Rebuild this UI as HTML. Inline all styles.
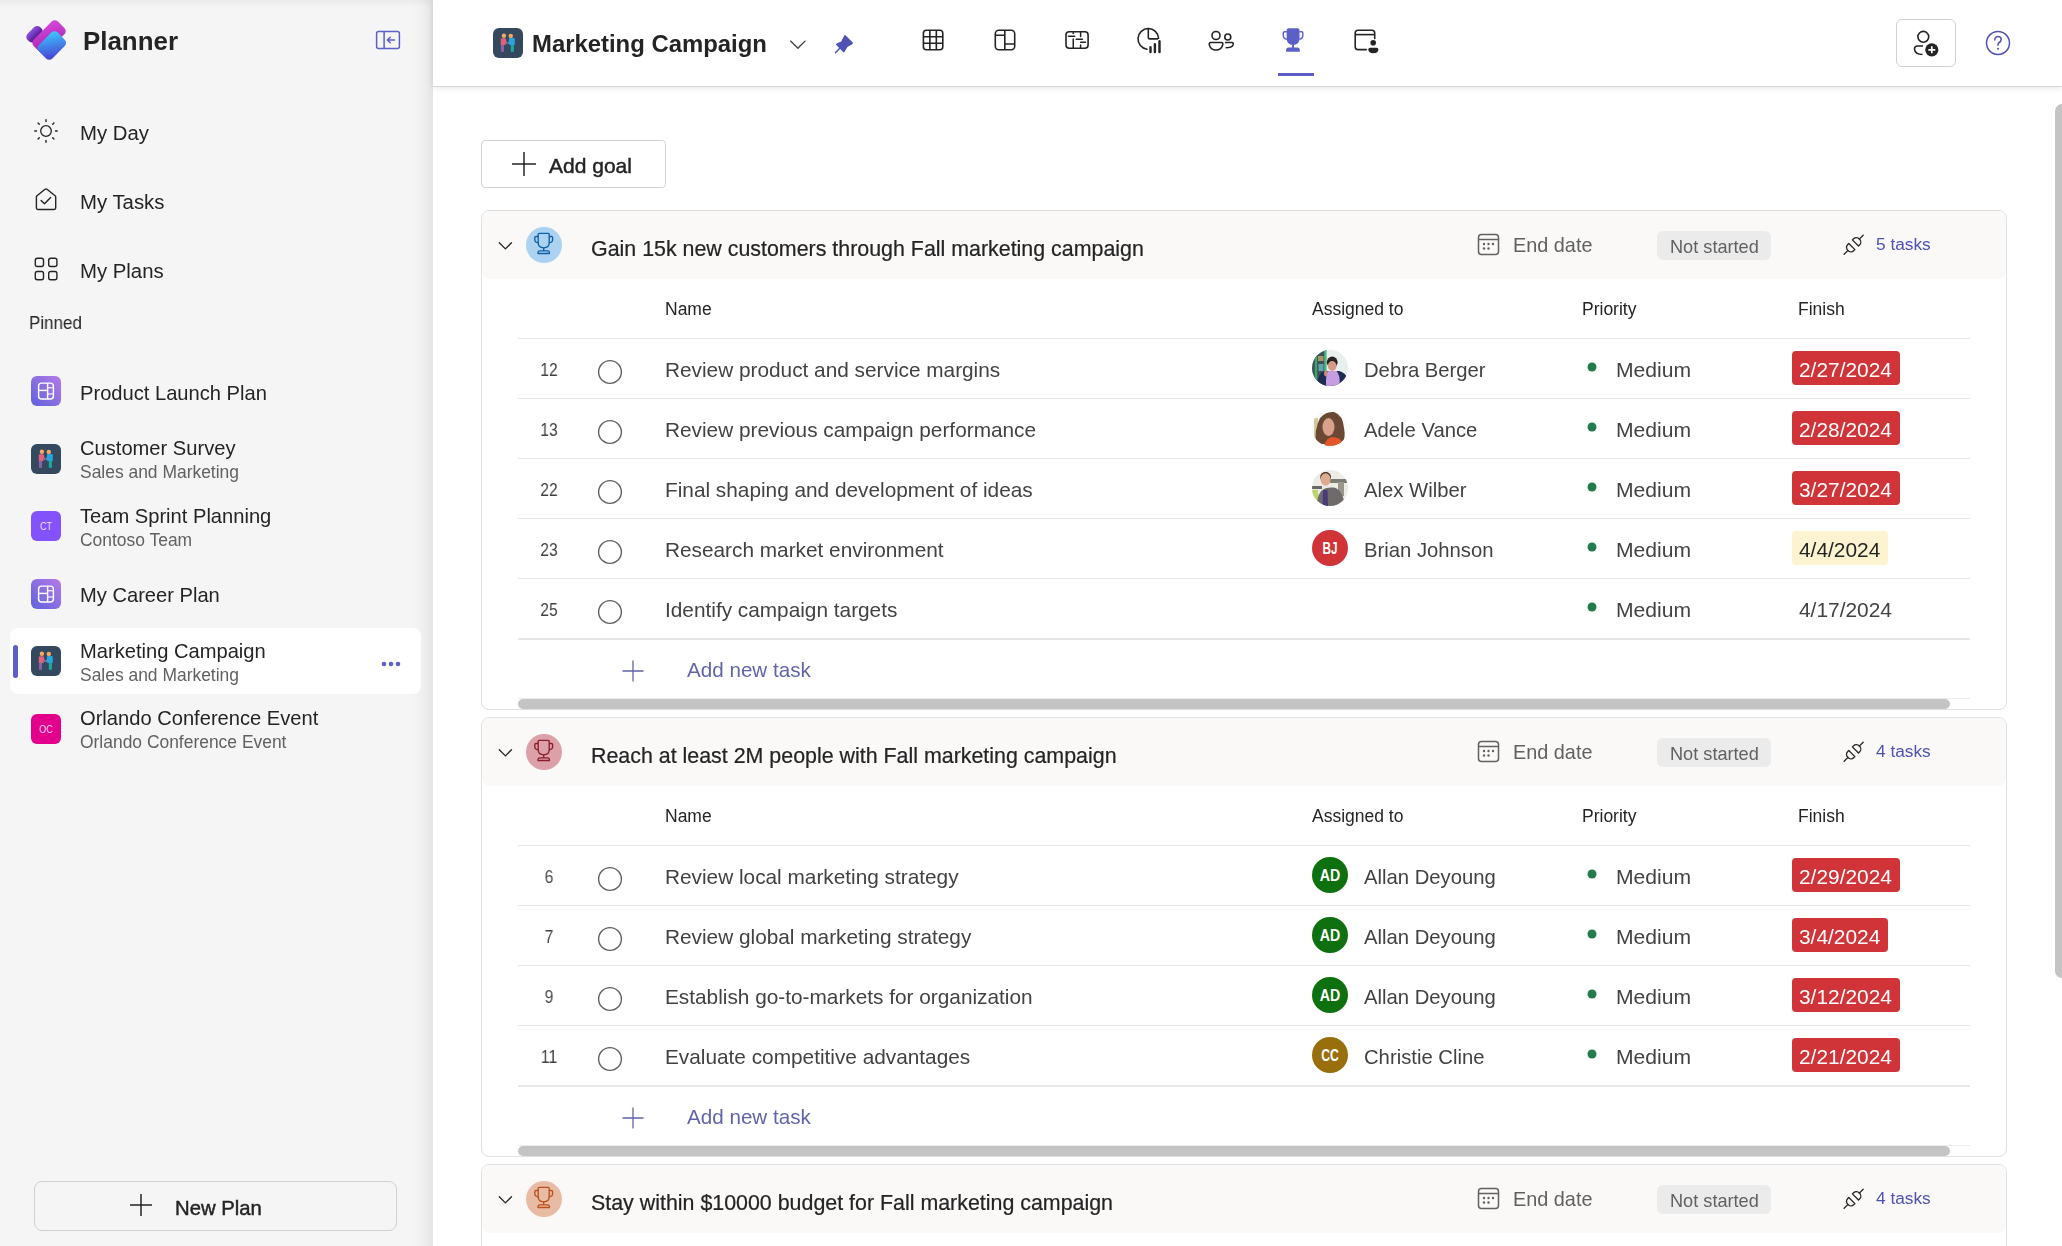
<!DOCTYPE html><html><head><meta charset="utf-8"><style>
html,body{margin:0;padding:0;width:2062px;height:1246px;overflow:hidden;background:#fff;font-family:"Liberation Sans", sans-serif;}
.t{position:absolute;white-space:nowrap;line-height:1;will-change:transform;}
.r{position:absolute;}
</style></head><body>
<div class="r" style="left:0px;top:0px;width:433px;height:1246px;background:#f5f5f5"></div>
<div class="r" style="left:0px;top:0px;width:433px;height:8px;background:linear-gradient(to bottom,rgba(0,0,0,0.04),rgba(0,0,0,0))"></div>
<div class="r" style="left:411px;top:0px;width:22px;height:1246px;background:linear-gradient(to right,rgba(0,0,0,0),rgba(0,0,0,0.02) 50%,rgba(0,0,0,0.065))"></div>
<svg class="r" style="left:22px;top:16px" width="48" height="48" viewBox="0 0 48 48">
<defs>
<linearGradient id="lg1" x1="0" y1="0" x2="0" y2="1"><stop offset="0" stop-color="#8d52e2"/><stop offset="1" stop-color="#4e1288"/></linearGradient>
<linearGradient id="lg2" x1="1" y1="0" x2="0" y2="1"><stop offset="0" stop-color="#db4ae0"/><stop offset="1" stop-color="#9a20a6"/></linearGradient>
<linearGradient id="lg3" x1="1" y1="0" x2="0" y2="1"><stop offset="0" stop-color="#3bd0fc"/><stop offset="1" stop-color="#4a36d4"/></linearGradient>
</defs>
<g transform="rotate(-45 24 24)">
<rect x="11" y="6.5" width="18" height="10.5" rx="4.5" fill="url(#lg1)"/>
<rect x="11" y="15" width="34.5" height="18" rx="4.5" fill="url(#lg2)"/>
<rect x="11" y="22.5" width="26.5" height="19" rx="4.5" fill="url(#lg3)"/>
</g></svg>
<div class="t" style="left:83.0px;top:29.49px;font-size:25.9px;color:#242424;font-weight:700;">Planner</div>
<svg class="r" style="left:374px;top:29px" width="28" height="22" viewBox="0 0 28 22"><rect x="2.6" y="2.6" width="22.8" height="17" rx="2" fill="none" stroke="#5b5fc7" stroke-width="1.5"/><line x1="10.1" y1="2.6" x2="10.1" y2="19.6" stroke="#5b5fc7" stroke-width="1.5"/><path d="M20.6 11H13.4M16.2 8.2L13.4 11L16.2 13.8" fill="none" stroke="#5b5fc7" stroke-width="1.5" stroke-linecap="round" stroke-linejoin="round"/></svg>
<svg class="r" style="left:33px;top:118px" width="26" height="26" viewBox="0 0 26 26"><circle cx="13" cy="13" r="5.3" fill="none" stroke="#242424" stroke-width="1.3"/><line x1="22.50" y1="13.00" x2="24.20" y2="13.00" stroke="#242424" stroke-width="1.4" stroke-linecap="round"/><line x1="19.72" y1="19.72" x2="20.92" y2="20.92" stroke="#242424" stroke-width="1.4" stroke-linecap="round"/><line x1="13.00" y1="22.50" x2="13.00" y2="24.20" stroke="#242424" stroke-width="1.4" stroke-linecap="round"/><line x1="6.28" y1="19.72" x2="5.08" y2="20.92" stroke="#242424" stroke-width="1.4" stroke-linecap="round"/><line x1="3.50" y1="13.00" x2="1.80" y2="13.00" stroke="#242424" stroke-width="1.4" stroke-linecap="round"/><line x1="6.28" y1="6.28" x2="5.08" y2="5.08" stroke="#242424" stroke-width="1.4" stroke-linecap="round"/><line x1="13.00" y1="3.50" x2="13.00" y2="1.80" stroke="#242424" stroke-width="1.4" stroke-linecap="round"/><line x1="19.72" y1="6.28" x2="20.92" y2="5.08" stroke="#242424" stroke-width="1.4" stroke-linecap="round"/></svg>
<div class="t" style="left:80.0px;top:122.70px;font-size:20.35px;color:#242424;">My Day</div>
<svg class="r" style="left:33px;top:187px" width="26" height="26" viewBox="0 0 26 26"><path d="M3.4 10 Q3.4 9.3 4 8.8 L12 2.3 Q13 1.6 14 2.3 L22.1 8.8 Q22.7 9.3 22.7 10 V21 Q22.7 22.45 21.2 22.45 H4.9 Q3.4 22.45 3.4 21 Z" fill="none" stroke="#242424" stroke-width="1.4" stroke-linejoin="round"/><path d="M8.1 13.5 L11.5 16.8 L17.6 10.4" fill="none" stroke="#242424" stroke-width="1.4" stroke-linecap="round" stroke-linejoin="round"/></svg>
<div class="t" style="left:80.0px;top:191.70px;font-size:20.35px;color:#242424;">My Tasks</div>
<svg class="r" style="left:33px;top:256px" width="26" height="26" viewBox="0 0 26 26"><rect x="2.3" y="2.3" width="8.2" height="8.2" rx="2" fill="none" stroke="#242424" stroke-width="1.4"/><rect x="15.7" y="2.3" width="8.2" height="8.2" rx="2" fill="none" stroke="#242424" stroke-width="1.4"/><rect x="2.3" y="15.5" width="8.2" height="8.2" rx="2" fill="none" stroke="#242424" stroke-width="1.4"/><rect x="15.7" y="15.5" width="8.2" height="8.2" rx="2" fill="none" stroke="#242424" stroke-width="1.4"/></svg>
<div class="t" style="left:80.0px;top:260.70px;font-size:20.35px;color:#242424;">My Plans</div>
<div class="t" style="left:28.5px;top:313.96px;font-size:18.4px;color:#242424;transform:scaleX(0.925);transform-origin:0 0;">Pinned</div>
<svg class="r" style="left:31px;top:376px" width="30" height="30" viewBox="0 0 30 30"><defs><linearGradient id="bga" x1="0" y1="1" x2="1" y2="0"><stop offset="0" stop-color="#5d63de"/><stop offset="1" stop-color="#b57ae6"/></linearGradient></defs>
<rect x="0" y="0" width="30" height="30" rx="6" fill="url(#bga)"/>
<rect x="7.6" y="7.1" width="14.8" height="15.8" rx="3" fill="none" stroke="#fff" stroke-width="1.45"/>
<line x1="16.6" y1="7.1" x2="16.6" y2="22.9" stroke="#fff" stroke-width="1.45"/><line x1="7.6" y1="14.4" x2="16.6" y2="14.4" stroke="#fff" stroke-width="1.45"/>
<line x1="16.6" y1="11.7" x2="22.4" y2="11.7" stroke="#fff" stroke-opacity="0.85" stroke-width="1.3"/><line x1="16.6" y1="17.95" x2="22.4" y2="17.95" stroke="#fff" stroke-opacity="0.85" stroke-width="1.3"/></svg>
<div class="t" style="left:80.0px;top:382.88px;font-size:20.14px;color:#242424;">Product Launch Plan</div>
<svg class="r" style="left:31px;top:444px" width="30" height="30" viewBox="0 0 30 30"><rect x="0" y="0" width="30" height="30" rx="6" fill="#34495e"/>
<circle cx="10.9" cy="7.8" r="2.2" fill="#f3a864"/><circle cx="17.8" cy="7.9" r="2.2" fill="#f3a864"/>
<path d="M7.8 11.2 Q7.8 10.2 8.8 10.2 H11.8 Q12.8 10.2 13 11.2 L13.4 13.8 L14.6 15.1 L13.8 15.9 L12.6 14.8 V16.9 H7.8 Z" fill="#e1627c"/>
<path d="M16 10.9 Q16 9.9 17 9.9 H20.8 Q21.8 9.9 21.8 10.9 V16.9 H16.2 V15.6 L14.6 15.9 L14.2 15.1 L15.8 13.5 Z" fill="#2ba3dc"/>
<rect x="7.9" y="16.9" width="3.1" height="6.9" fill="#8c5fa8"/>
<rect x="17.8" y="16.9" width="3.1" height="6.9" fill="#1ba9a2"/></svg>
<div class="t" style="left:80.0px;top:437.88px;font-size:20.14px;color:#242424;">Customer Survey</div>
<div class="t" style="left:80.0px;top:463.68px;font-size:17.44px;color:#616161;">Sales and Marketing</div>
<div class="r" style="left:31px;top:511px;width:30px;height:30px;border-radius:6px;background:#8352fd;"></div>
<div class="r" style="left:31px;top:511.5px;width:30px;height:30px;color:rgba(255,255,255,0.85);font-size:10px;line-height:30px;text-align:center;transform:scaleX(0.9);">CT</div>
<div class="t" style="left:80.0px;top:505.88px;font-size:20.14px;color:#242424;">Team Sprint Planning</div>
<div class="t" style="left:80.0px;top:532.18px;font-size:17.44px;color:#616161;">Contoso Team</div>
<svg class="r" style="left:31px;top:579px" width="30" height="30" viewBox="0 0 30 30"><defs><linearGradient id="bgb" x1="0" y1="1" x2="1" y2="0"><stop offset="0" stop-color="#5d63de"/><stop offset="1" stop-color="#b57ae6"/></linearGradient></defs>
<rect x="0" y="0" width="30" height="30" rx="6" fill="url(#bgb)"/>
<rect x="7.6" y="7.1" width="14.8" height="15.8" rx="3" fill="none" stroke="#fff" stroke-width="1.45"/>
<line x1="16.6" y1="7.1" x2="16.6" y2="22.9" stroke="#fff" stroke-width="1.45"/><line x1="7.6" y1="14.4" x2="16.6" y2="14.4" stroke="#fff" stroke-width="1.45"/>
<line x1="16.6" y1="11.7" x2="22.4" y2="11.7" stroke="#fff" stroke-opacity="0.85" stroke-width="1.3"/><line x1="16.6" y1="17.95" x2="22.4" y2="17.95" stroke="#fff" stroke-opacity="0.85" stroke-width="1.3"/></svg>
<div class="t" style="left:80.0px;top:584.88px;font-size:20.14px;color:#242424;">My Career Plan</div>
<div class="r" style="left:10px;top:628px;width:411px;height:66px;background:#fff;border-radius:8px"></div>
<div class="r" style="left:13px;top:644.5px;width:5px;height:33px;background:#5b5fc7;border-radius:3px"></div>
<svg class="r" style="left:31px;top:646px" width="30" height="30" viewBox="0 0 30 30"><rect x="0" y="0" width="30" height="30" rx="6" fill="#34495e"/>
<circle cx="10.9" cy="7.8" r="2.2" fill="#f3a864"/><circle cx="17.8" cy="7.9" r="2.2" fill="#f3a864"/>
<path d="M7.8 11.2 Q7.8 10.2 8.8 10.2 H11.8 Q12.8 10.2 13 11.2 L13.4 13.8 L14.6 15.1 L13.8 15.9 L12.6 14.8 V16.9 H7.8 Z" fill="#e1627c"/>
<path d="M16 10.9 Q16 9.9 17 9.9 H20.8 Q21.8 9.9 21.8 10.9 V16.9 H16.2 V15.6 L14.6 15.9 L14.2 15.1 L15.8 13.5 Z" fill="#2ba3dc"/>
<rect x="7.9" y="16.9" width="3.1" height="6.9" fill="#8c5fa8"/>
<rect x="17.8" y="16.9" width="3.1" height="6.9" fill="#1ba9a2"/></svg>
<div class="t" style="left:80.0px;top:641.38px;font-size:20.14px;color:#242424;">Marketing Campaign</div>
<div class="t" style="left:80.0px;top:667.18px;font-size:17.44px;color:#616161;">Sales and Marketing</div>
<svg class="r" style="left:380px;top:660px" width="24" height="8" viewBox="0 0 24 8"><circle cx="4.0" cy="4" r="2.3" fill="#5b5fc7"/><circle cx="11.0" cy="4" r="2.3" fill="#5b5fc7"/><circle cx="18.0" cy="4" r="2.3" fill="#5b5fc7"/></svg>
<div class="r" style="left:31px;top:714px;width:30px;height:30px;border-radius:6px;background:#e3008c;"></div>
<div class="r" style="left:31px;top:714.5px;width:30px;height:30px;color:rgba(255,255,255,0.85);font-size:10px;line-height:30px;text-align:center;transform:scaleX(0.9);">OC</div>
<div class="t" style="left:80.0px;top:707.88px;font-size:20.14px;color:#242424;">Orlando Conference Event</div>
<div class="t" style="left:80.0px;top:733.68px;font-size:17.44px;color:#616161;">Orlando Conference Event</div>
<div class="r" style="left:34px;top:1181px;width:361px;height:48px;border:1px solid #d1d1d1;border-radius:8px"></div>
<svg class="r" style="left:128px;top:1192px" width="26" height="26" viewBox="0 0 26 26"><path d="M13 2V24M2 13H24" stroke="#242424" stroke-width="1.5"/></svg>
<div class="t" style="left:175.4px;top:1197.94px;font-size:20.3px;color:#242424;-webkit-text-stroke:0.45px #242424;">New Plan</div>
<div class="r" style="left:433px;top:0px;width:1629px;height:86px;background:#fff;box-shadow:0 1px 0 #d8d8d8,0 2px 6px rgba(0,0,0,0.11)"></div>
<svg class="r" style="left:493px;top:28px" width="30" height="30" viewBox="0 0 30 30"><rect x="0" y="0" width="30" height="30" rx="6" fill="#34495e"/>
<circle cx="10.9" cy="7.8" r="2.2" fill="#f3a864"/><circle cx="17.8" cy="7.9" r="2.2" fill="#f3a864"/>
<path d="M7.8 11.2 Q7.8 10.2 8.8 10.2 H11.8 Q12.8 10.2 13 11.2 L13.4 13.8 L14.6 15.1 L13.8 15.9 L12.6 14.8 V16.9 H7.8 Z" fill="#e1627c"/>
<path d="M16 10.9 Q16 9.9 17 9.9 H20.8 Q21.8 9.9 21.8 10.9 V16.9 H16.2 V15.6 L14.6 15.9 L14.2 15.1 L15.8 13.5 Z" fill="#2ba3dc"/>
<rect x="7.9" y="16.9" width="3.1" height="6.9" fill="#8c5fa8"/>
<rect x="17.8" y="16.9" width="3.1" height="6.9" fill="#1ba9a2"/></svg>
<div class="t" style="left:532.4px;top:31.69px;font-size:23.89px;color:#242424;font-weight:700;">Marketing Campaign</div>
<svg class="r" style="left:788px;top:37px" width="20" height="14" viewBox="0 0 20 14"><path d="M2.6 4.1L9.9 11.3L17 4.1" fill="none" stroke="#424242" stroke-width="1.35" stroke-linecap="round" stroke-linejoin="round"/></svg>
<svg class="r" style="left:832px;top:32px" width="24" height="24" viewBox="0 0 24 24"><path d="M13.2 3.1 L20.6 10.3 Q21.4 11.4 20.3 12.2 L15.6 14.8 L12.4 19.9 Q11.8 20.7 11.1 20 L4.3 13 Q3.6 12.1 4.6 11.6 L9.2 9.6 L12 3.9 Q12.5 2.6 13.2 3.1Z" fill="#4f52b2"/><path d="M7.6 16.4 L3.6 20.6" stroke="#4f52b2" stroke-width="1.5" stroke-linecap="round"/></svg>
<svg class="r" style="left:921px;top:28px" width="24" height="24" viewBox="0 0 24 24"><rect x="2.4" y="2.3" width="19.4" height="19.4" rx="3" fill="none" stroke="#242424" stroke-width="1.6"/><path d="M8.87 2.3V21.7M15.33 2.3V21.7M2.4 8.77H21.8M2.4 15.23H21.8" stroke="#242424" stroke-width="1.6"/></svg>
<svg class="r" style="left:993px;top:28px" width="24" height="24" viewBox="0 0 24 24"><rect x="2.3" y="2.3" width="19.4" height="19.4" rx="3.5" fill="none" stroke="#242424" stroke-width="1.6"/><path d="M11.8 2.3V21.7M2.3 7.2H11.8M11.8 16H21.7" stroke="#242424" stroke-width="1.6"/></svg>
<svg class="r" style="left:1064px;top:30px" width="26" height="20" viewBox="0 0 26 20"><rect x="2" y="1.7" width="22.1" height="16.5" rx="3.2" fill="none" stroke="#242424" stroke-width="1.6"/><g stroke="#242424" stroke-width="1.5" stroke-linecap="round"><path d="M9.25 1.7V3.4M9.25 8.9V18.2M16.6 1.7V6.6M16.6 15V18.2"/><path d="M4.5 6.2H10.7M12.2 9.3H18.4M16.6 12.2H21.5"/></g></svg>
<svg class="r" style="left:1136px;top:26px" width="28" height="28" viewBox="0 0 28 28"><g fill="none" stroke="#242424" stroke-width="1.6" stroke-linecap="round"><path d="M12.3 2.5 A10.4 10.4 0 0 0 11 23.2"/><path d="M12.3 2.5 V11.4 Q12.3 12.9 13.8 12.9 H21.5 M22.6 12.3 A10.4 10.4 0 0 0 12.3 2.5"/></g><path d="M14.5 21.3V26M18.9 18.2V26M23.5 15.3V26" stroke="#242424" stroke-width="2.4" stroke-linecap="round"/></svg>
<svg class="r" style="left:1208.1px;top:29.6px" width="28" height="23" viewBox="0 0 28 23"><circle cx="8" cy="5.5" r="4" fill="none" stroke="#242424" stroke-width="1.6"/><circle cx="19.8" cy="7" r="3" fill="none" stroke="#242424" stroke-width="1.6"/><path d="M2.5 12.5 H13.5 Q15.5 12.5 14.5 15.5 Q13 20 8 20 Q3 20 1.5 15.5 Q0.8 12.5 2.5 12.5Z" fill="none" stroke="#242424" stroke-width="1.6"/><path d="M17 12.5H23.8Q25.8 12.5 25 15Q24 17.8 17.5 17.8" fill="none" stroke="#242424" stroke-width="1.6"/></svg>
<svg class="r" style="left:1280px;top:27px" width="26" height="26" viewBox="0 0 26 26"><path d="M8.65 1.15 H17.5 Q19.5 1.15 19.5 3.15 V11.5 Q19.5 17.95 13.05 17.95 Q6.65 17.95 6.65 11.5 V3.15 Q6.65 1.15 8.65 1.15 Z M12.1 17 H14 V21 H12.1Z M8.6 20.4 H17.3 Q19.8 20.4 19.8 22.9 V24.8 H6.1 V22.9 Q6.1 20.4 8.6 20.4 Z" fill="#5b5fc7"/><path d="M6.8 4.7 H4.4 Q3.25 4.7 3.25 5.9 V8.3 Q3.25 11.6 6.9 12.4 M19.35 4.7 H21.7 Q22.85 4.7 22.85 5.9 V8.3 Q22.85 11.6 19.2 12.4" fill="none" stroke="#5b5fc7" stroke-width="1.4"/></svg>
<div class="r" style="left:1278px;top:73px;width:36px;height:3px;background:#5b5fc7"></div>
<svg class="r" style="left:1353px;top:28px" width="28" height="28" viewBox="0 0 28 28"><path d="M13.2 21.65 H5 Q2.2 21.65 2.2 18.85 V5.1 Q2.2 2.3 5 2.3 H18.9 Q21.7 2.3 21.7 5.1 V10.5" fill="none" stroke="#242424" stroke-width="1.6" stroke-linecap="round"/><path d="M2.2 6.6H21.7" stroke="#242424" stroke-width="1.6"/><circle cx="20.2" cy="14.8" r="2.8" fill="#242424"/><path d="M15.3 21.5 Q15.3 19.7 17.1 19.7 H23.6 Q25.4 19.7 25.4 21.5 Q25.4 25.2 20.35 25.2 Q15.3 25.2 15.3 21.5Z" fill="#242424"/></svg>
<div class="r" style="left:1896px;top:19px;width:58px;height:46px;border:1px solid #d1d1d1;border-radius:6px;background:#fff"></div>
<svg class="r" style="left:1911px;top:29px" width="30" height="30" viewBox="0 0 30 30"><circle cx="12.3" cy="7.8" r="5.4" fill="none" stroke="#242424" stroke-width="1.6"/><path d="M12 17 H6.5 Q3.5 17 3.5 20 Q4 25.5 11.5 25.5" fill="none" stroke="#242424" stroke-width="1.6"/><circle cx="20.8" cy="20.8" r="6.6" fill="#242424"/><path d="M20.8 17.3V24.3M17.3 20.8H24.3" stroke="#fff" stroke-width="1.7"/></svg>
<svg class="r" style="left:1984px;top:29px" width="28" height="28" viewBox="0 0 28 28"><circle cx="14" cy="14" r="11.5" fill="none" stroke="#4f52b2" stroke-width="1.5"/><path d="M10.8 11 Q10.8 7.6 14 7.6 Q17.2 7.6 17.2 10.6 Q17.2 12.4 15.2 13.5 Q14 14.2 14 16.2" fill="none" stroke="#4f52b2" stroke-width="1.5" stroke-linecap="round"/><circle cx="14" cy="19.8" r="1" fill="#4f52b2"/></svg>
<div class="r" style="left:2055px;top:104px;width:14px;height:874px;background:#c4c4c4;border-radius:7px"></div>
<div class="r" style="left:481px;top:140px;width:183px;height:46px;border:1px solid #d1d1d1;border-radius:4px;background:#fff"></div>
<svg class="r" style="left:510px;top:150px" width="28" height="28" viewBox="0 0 28 28"><path d="M14 2V26M2 14H26" stroke="#242424" stroke-width="1.5"/></svg>
<div class="t" style="left:548.6px;top:155.15px;font-size:21.0px;color:#242424;-webkit-text-stroke:0.45px #242424;">Add goal</div>
<div class="r" style="left:481px;top:209.5px;width:1524px;height:500px;border:1px solid #e0e0e0;border-radius:8px;background:#fff;box-sizing:border-box;width:1526px"></div>
<div class="r" style="left:482px;top:210.5px;width:1524px;height:68.5px;background:#faf9f8;border-radius:7px 7px 8px 8px"></div>
<svg class="r" style="left:496px;top:238.5px" width="18" height="12" viewBox="0 0 18 12"><path d="M3.3 3.7L9.4 9.9L15.5 3.7" fill="none" stroke="#242424" stroke-width="1.3" stroke-linecap="round" stroke-linejoin="round"/></svg>
<svg class="r" style="left:526px;top:227.0px" width="36" height="36" viewBox="0 0 36 36"><circle cx="18" cy="18" r="18" fill="#abd3f1"/><g fill="none" stroke="#0f5fa8" stroke-width="1.35" stroke-linejoin="round"><path d="M12.2 7.3 Q12.2 6.3 13.2 6.3 H22.2 Q23.2 6.3 23.2 7.3 V15.5 Q23.2 20.8 17.7 20.8 Q12.2 20.8 12.2 15.5 Z"/><path d="M12.2 9.5 H10 Q8.8 9.5 8.8 10.7 V12.7 Q8.8 15.4 12.4 15.8"/><path d="M23.2 9.5 H25.4 Q26.6 9.5 26.6 10.7 V12.7 Q26.6 15.4 23 15.8"/><path d="M17.7 20.8 V24"/><path d="M13.8 23.8 H21.6 Q23.4 23.8 23.4 25.6 V26.5 H12 V25.6 Q12 23.8 13.8 23.8Z"/></g></svg>
<div class="t" style="left:591.4px;top:238.71px;font-size:21.4px;color:#242424;-webkit-text-stroke:0.22px #242424;">Gain 15k new customers through Fall marketing campaign</div>
<svg class="r" style="left:1476px;top:231.5px" width="26" height="26" viewBox="0 0 26 26"><rect x="2.5" y="2.5" width="20" height="20" rx="3" fill="none" stroke="#616161" stroke-width="1.5"/><path d="M2.5 7.5H22.5" stroke="#616161" stroke-width="1.5"/><circle cx="8.0" cy="12.0" r="1.2" fill="#616161"/><circle cx="12.5" cy="12.0" r="1.2" fill="#616161"/><circle cx="17.0" cy="12.0" r="1.2" fill="#616161"/><circle cx="8.0" cy="16.5" r="1.2" fill="#616161"/><circle cx="12.5" cy="16.5" r="1.2" fill="#616161"/></svg>
<div class="t" style="left:1512.5px;top:235.63px;font-size:19.85px;color:#616161;">End date</div>
<div class="r" style="left:1657px;top:231.0px;width:114px;height:29px;background:#ebebeb;border-radius:6px"></div>
<div class="t" style="left:1669.6px;top:237.56px;font-size:18.16px;color:#616161;">Not started</div>
<svg class="r" style="left:1840px;top:231.5px" width="26" height="26" viewBox="0 0 26 26"><g transform="translate(13.65 12.75) rotate(-45)" fill="none" stroke="#242424" stroke-width="1.3" stroke-linejoin="round" stroke-linecap="round"><path d="M-2.55 -4.3H-4.3A3.9 4.3 0 0 0 -4.3 4.3H-2.55Z"/><path d="M2.55 -4.3H4.3A3.9 4.3 0 0 1 4.3 4.3H2.55Z"/><path d="M-8 0H-13.5M8 0H13.5"/></g></svg>
<div class="t" style="left:1876.4px;top:236.39px;font-size:17.3px;color:#4f52b2;">5 tasks</div>
<div class="t" style="left:664.6px;top:301.12px;font-size:17.5px;color:#242424;">Name</div>
<div class="t" style="left:1312.3px;top:301.12px;font-size:17.5px;color:#242424;">Assigned to</div>
<div class="t" style="left:1582.2px;top:301.12px;font-size:17.5px;color:#242424;">Priority</div>
<div class="t" style="left:1798.3px;top:301.12px;font-size:17.5px;color:#242424;">Finish</div>
<div class="r" style="left:518px;top:338.0px;width:1452px;height:1px;background:#e6e6e6"></div>
<div class="t" style="left:549.2px;top:361.20px;font-size:18px;color:#424242;transform:translateX(-50%) scaleX(0.87);">12</div>
<svg class="r" style="left:597px;top:358.5px" width="26" height="26" viewBox="0 0 26 26"><circle cx="13" cy="13" r="11.4" fill="none" stroke="#616161" stroke-width="1.4"/></svg>
<div class="t" style="left:664.7px;top:359.82px;font-size:20.8px;color:#424242;">Review product and service margins</div>
<svg class="r" style="left:1312px;top:350.0px" width="36" height="36" viewBox="0 0 36 36"><defs><clipPath id="c2090"><circle cx="18" cy="18" r="18"/></clipPath></defs><g clip-path="url(#c2090)"><rect x="0" y="0" width="36" height="36" fill="#e8efec"/><rect x="0" y="0" width="14" height="36" fill="#3e5158"/><rect x="6" y="6" width="5.5" height="5" fill="#a79664"/><rect x="6.5" y="14" width="5" height="7" fill="#5fa6ad"/><rect x="2.8" y="0" width="2.4" height="36" fill="#3aa56c"/><rect x="12.2" y="0" width="2.4" height="22" fill="#4db67f"/><ellipse cx="20.2" cy="12.3" rx="5.4" ry="5.8" fill="#2a2222"/><ellipse cx="20.2" cy="16" rx="4.3" ry="5" fill="#d69a8b"/><path d="M4 36 L7 26 Q9 21.5 14 21 L27 21 Q33 22.5 35.5 28 L36 36Z" fill="#1c2c52"/><ellipse cx="14" cy="23.5" rx="2" ry="3" fill="#c98a79"/><path d="M14 36 Q13.5 25 16.5 21 L24.5 21 Q28.5 25 27.5 36Z" fill="#c59de0"/></g></svg>
<div class="t" style="left:1364.0px;top:359.79px;font-size:20.25px;color:#424242;">Debra Berger</div>
<svg class="r" style="left:1587px;top:361.5px" width="10" height="10" viewBox="0 0 10 10"><circle cx="5" cy="5" r="4.5" fill="#237b4b"/></svg>
<div class="t" style="left:1616.2px;top:359.46px;font-size:21.1px;color:#424242;">Medium</div>
<div class="r" style="left:1792px;top:351.0px;width:108px;height:33.5px;background:#d13438;border-radius:4px"></div>
<div class="t" style="left:1798.8px;top:359.84px;font-size:20.9px;color:#ffffff;">2/27/2024</div>
<div class="r" style="left:518px;top:398.0px;width:1452px;height:1px;background:#e6e6e6"></div>
<div class="t" style="left:549.2px;top:421.20px;font-size:18px;color:#424242;transform:translateX(-50%) scaleX(0.87);">13</div>
<svg class="r" style="left:597px;top:418.5px" width="26" height="26" viewBox="0 0 26 26"><circle cx="13" cy="13" r="11.4" fill="none" stroke="#616161" stroke-width="1.4"/></svg>
<div class="t" style="left:664.7px;top:419.82px;font-size:20.8px;color:#424242;">Review previous campaign performance</div>
<svg class="r" style="left:1312px;top:410.0px" width="36" height="36" viewBox="0 0 36 36"><defs><clipPath id="c2091"><circle cx="18" cy="18" r="18"/></clipPath></defs><g clip-path="url(#c2091)"><rect x="0" y="0" width="36" height="36" fill="#fbfaf7"/><rect x="2" y="8" width="4" height="22" fill="#d8c79a"/><path d="M4 34 Q2 20 8 8 Q14 1 22 2 Q31 5 32 18 Q34 28 30 34 Z" fill="#6b4834"/><ellipse cx="16.5" cy="17" rx="6" ry="9" fill="#d9a18b"/><path d="M12 36 Q14 28 20 27 Q28 27 31 33 L31 36Z" fill="#e2562a"/></g></svg>
<div class="t" style="left:1364.0px;top:419.79px;font-size:20.25px;color:#424242;">Adele Vance</div>
<svg class="r" style="left:1587px;top:421.5px" width="10" height="10" viewBox="0 0 10 10"><circle cx="5" cy="5" r="4.5" fill="#237b4b"/></svg>
<div class="t" style="left:1616.2px;top:419.46px;font-size:21.1px;color:#424242;">Medium</div>
<div class="r" style="left:1792px;top:411.0px;width:108px;height:33.5px;background:#d13438;border-radius:4px"></div>
<div class="t" style="left:1798.8px;top:419.84px;font-size:20.9px;color:#ffffff;">2/28/2024</div>
<div class="r" style="left:518px;top:458.0px;width:1452px;height:1px;background:#e6e6e6"></div>
<div class="t" style="left:549.2px;top:481.20px;font-size:18px;color:#424242;transform:translateX(-50%) scaleX(0.87);">22</div>
<svg class="r" style="left:597px;top:478.5px" width="26" height="26" viewBox="0 0 26 26"><circle cx="13" cy="13" r="11.4" fill="none" stroke="#616161" stroke-width="1.4"/></svg>
<div class="t" style="left:664.7px;top:479.82px;font-size:20.8px;color:#424242;">Final shaping and development of ideas</div>
<svg class="r" style="left:1312px;top:470.0px" width="36" height="36" viewBox="0 0 36 36"><defs><clipPath id="c2092"><circle cx="18" cy="18" r="18"/></clipPath></defs><g clip-path="url(#c2092)"><rect x="0" y="0" width="36" height="36" fill="#ecebe6"/><rect x="18" y="9" width="18" height="4" fill="#7c7c72"/><rect x="26" y="12" width="6" height="14" fill="#9a968c"/><rect x="0" y="16" width="10" height="3" fill="#6a6a62"/><rect x="0" y="20" width="6" height="14" fill="#bcd46c"/><ellipse cx="13.6" cy="7" rx="5.4" ry="5" fill="#4a3226"/><ellipse cx="13.6" cy="9.5" rx="5" ry="6.2" fill="#dcab90"/><path d="M5 36 Q5 22 12 19 Q14 17 22 17.5 Q31 20 33 36Z" fill="#6f6b6b"/><path d="M11 20 L15.5 20 L16 36 L10.5 36Z" fill="#4b3a7a"/></g></svg>
<div class="t" style="left:1364.0px;top:479.79px;font-size:20.25px;color:#424242;">Alex Wilber</div>
<svg class="r" style="left:1587px;top:481.5px" width="10" height="10" viewBox="0 0 10 10"><circle cx="5" cy="5" r="4.5" fill="#237b4b"/></svg>
<div class="t" style="left:1616.2px;top:479.46px;font-size:21.1px;color:#424242;">Medium</div>
<div class="r" style="left:1792px;top:471.0px;width:108px;height:33.5px;background:#d13438;border-radius:4px"></div>
<div class="t" style="left:1798.8px;top:479.84px;font-size:20.9px;color:#ffffff;">3/27/2024</div>
<div class="r" style="left:518px;top:518.0px;width:1452px;height:1px;background:#e6e6e6"></div>
<div class="t" style="left:549.2px;top:541.20px;font-size:18px;color:#424242;transform:translateX(-50%) scaleX(0.87);">23</div>
<svg class="r" style="left:597px;top:538.5px" width="26" height="26" viewBox="0 0 26 26"><circle cx="13" cy="13" r="11.4" fill="none" stroke="#616161" stroke-width="1.4"/></svg>
<div class="t" style="left:664.7px;top:539.82px;font-size:20.8px;color:#424242;">Research market environment</div>
<svg class="r" style="left:1312px;top:530.0px" width="36" height="36" viewBox="0 0 36 36"><circle cx="18" cy="18" r="18" fill="#d13438"/><text x="18" y="24" text-anchor="middle" font-family="Liberation Sans" font-weight="700" font-size="16" fill="#fff" textLength="15" lengthAdjust="spacingAndGlyphs">BJ</text></svg>
<div class="t" style="left:1364.0px;top:539.79px;font-size:20.25px;color:#424242;">Brian Johnson</div>
<svg class="r" style="left:1587px;top:541.5px" width="10" height="10" viewBox="0 0 10 10"><circle cx="5" cy="5" r="4.5" fill="#237b4b"/></svg>
<div class="t" style="left:1616.2px;top:539.46px;font-size:21.1px;color:#424242;">Medium</div>
<div class="r" style="left:1792px;top:531.0px;width:96px;height:33.5px;background:#fdf3d0;border-radius:4px"></div>
<div class="t" style="left:1798.8px;top:539.84px;font-size:20.9px;color:#242424;">4/4/2024</div>
<div class="r" style="left:518px;top:578.0px;width:1452px;height:1px;background:#e6e6e6"></div>
<div class="t" style="left:549.2px;top:601.20px;font-size:18px;color:#424242;transform:translateX(-50%) scaleX(0.87);">25</div>
<svg class="r" style="left:597px;top:598.5px" width="26" height="26" viewBox="0 0 26 26"><circle cx="13" cy="13" r="11.4" fill="none" stroke="#616161" stroke-width="1.4"/></svg>
<div class="t" style="left:664.7px;top:599.82px;font-size:20.8px;color:#424242;">Identify campaign targets</div>
<svg class="r" style="left:1587px;top:601.5px" width="10" height="10" viewBox="0 0 10 10"><circle cx="5" cy="5" r="4.5" fill="#237b4b"/></svg>
<div class="t" style="left:1616.2px;top:599.46px;font-size:21.1px;color:#424242;">Medium</div>
<div class="t" style="left:1798.8px;top:599.84px;font-size:20.9px;color:#424242;">4/17/2024</div>
<div class="r" style="left:518px;top:638.0px;width:1452px;height:1px;background:#e6e6e6"></div>
<div class="r" style="left:518px;top:638.0px;width:1452px;height:2px;background:#e6e6e6"></div>
<svg class="r" style="left:621px;top:658.5px" width="24" height="24" viewBox="0 0 24 24"><path d="M12 1.5V22.5M1.5 12H22.5" stroke="#6264a7" stroke-width="1.3"/></svg>
<div class="t" style="left:686.5px;top:660.46px;font-size:20.63px;color:#6264a7;">Add new task</div>
<div class="r" style="left:518px;top:698.0px;width:1452px;height:1px;background:#ececec"></div>
<div class="r" style="left:518px;top:699.0px;width:1432px;height:10px;background:#c4c4c4;border-radius:5px"></div>
<div class="r" style="left:481px;top:716.5px;width:1524px;height:440px;border:1px solid #e0e0e0;border-radius:8px;background:#fff;box-sizing:border-box;width:1526px"></div>
<div class="r" style="left:482px;top:717.5px;width:1524px;height:68.5px;background:#faf9f8;border-radius:7px 7px 8px 8px"></div>
<svg class="r" style="left:496px;top:745.5px" width="18" height="12" viewBox="0 0 18 12"><path d="M3.3 3.7L9.4 9.9L15.5 3.7" fill="none" stroke="#242424" stroke-width="1.3" stroke-linecap="round" stroke-linejoin="round"/></svg>
<svg class="r" style="left:526px;top:734.0px" width="36" height="36" viewBox="0 0 36 36"><circle cx="18" cy="18" r="18" fill="#dba0a8"/><g fill="none" stroke="#8a1c2c" stroke-width="1.35" stroke-linejoin="round"><path d="M12.2 7.3 Q12.2 6.3 13.2 6.3 H22.2 Q23.2 6.3 23.2 7.3 V15.5 Q23.2 20.8 17.7 20.8 Q12.2 20.8 12.2 15.5 Z"/><path d="M12.2 9.5 H10 Q8.8 9.5 8.8 10.7 V12.7 Q8.8 15.4 12.4 15.8"/><path d="M23.2 9.5 H25.4 Q26.6 9.5 26.6 10.7 V12.7 Q26.6 15.4 23 15.8"/><path d="M17.7 20.8 V24"/><path d="M13.8 23.8 H21.6 Q23.4 23.8 23.4 25.6 V26.5 H12 V25.6 Q12 23.8 13.8 23.8Z"/></g></svg>
<div class="t" style="left:591.4px;top:745.71px;font-size:21.4px;color:#242424;-webkit-text-stroke:0.22px #242424;">Reach at least 2M people with Fall marketing campaign</div>
<svg class="r" style="left:1476px;top:738.5px" width="26" height="26" viewBox="0 0 26 26"><rect x="2.5" y="2.5" width="20" height="20" rx="3" fill="none" stroke="#616161" stroke-width="1.5"/><path d="M2.5 7.5H22.5" stroke="#616161" stroke-width="1.5"/><circle cx="8.0" cy="12.0" r="1.2" fill="#616161"/><circle cx="12.5" cy="12.0" r="1.2" fill="#616161"/><circle cx="17.0" cy="12.0" r="1.2" fill="#616161"/><circle cx="8.0" cy="16.5" r="1.2" fill="#616161"/><circle cx="12.5" cy="16.5" r="1.2" fill="#616161"/></svg>
<div class="t" style="left:1512.5px;top:742.63px;font-size:19.85px;color:#616161;">End date</div>
<div class="r" style="left:1657px;top:738.0px;width:114px;height:29px;background:#ebebeb;border-radius:6px"></div>
<div class="t" style="left:1669.6px;top:744.56px;font-size:18.16px;color:#616161;">Not started</div>
<svg class="r" style="left:1840px;top:738.5px" width="26" height="26" viewBox="0 0 26 26"><g transform="translate(13.65 12.75) rotate(-45)" fill="none" stroke="#242424" stroke-width="1.3" stroke-linejoin="round" stroke-linecap="round"><path d="M-2.55 -4.3H-4.3A3.9 4.3 0 0 0 -4.3 4.3H-2.55Z"/><path d="M2.55 -4.3H4.3A3.9 4.3 0 0 1 4.3 4.3H2.55Z"/><path d="M-8 0H-13.5M8 0H13.5"/></g></svg>
<div class="t" style="left:1876.4px;top:743.39px;font-size:17.3px;color:#4f52b2;">4 tasks</div>
<div class="t" style="left:664.6px;top:808.12px;font-size:17.5px;color:#242424;">Name</div>
<div class="t" style="left:1312.3px;top:808.12px;font-size:17.5px;color:#242424;">Assigned to</div>
<div class="t" style="left:1582.2px;top:808.12px;font-size:17.5px;color:#242424;">Priority</div>
<div class="t" style="left:1798.3px;top:808.12px;font-size:17.5px;color:#242424;">Finish</div>
<div class="r" style="left:518px;top:845.0px;width:1452px;height:1px;background:#e6e6e6"></div>
<div class="t" style="left:549.2px;top:868.20px;font-size:18px;color:#424242;transform:translateX(-50%) scaleX(0.87);">6</div>
<svg class="r" style="left:597px;top:865.5px" width="26" height="26" viewBox="0 0 26 26"><circle cx="13" cy="13" r="11.4" fill="none" stroke="#616161" stroke-width="1.4"/></svg>
<div class="t" style="left:664.7px;top:866.82px;font-size:20.8px;color:#424242;">Review local marketing strategy</div>
<svg class="r" style="left:1312px;top:857.0px" width="36" height="36" viewBox="0 0 36 36"><circle cx="18" cy="18" r="18" fill="#0e700e"/><text x="18" y="24" text-anchor="middle" font-family="Liberation Sans" font-weight="700" font-size="16" fill="#fff" textLength="20.5" lengthAdjust="spacingAndGlyphs">AD</text></svg>
<div class="t" style="left:1364.0px;top:866.79px;font-size:20.25px;color:#424242;">Allan Deyoung</div>
<svg class="r" style="left:1587px;top:868.5px" width="10" height="10" viewBox="0 0 10 10"><circle cx="5" cy="5" r="4.5" fill="#237b4b"/></svg>
<div class="t" style="left:1616.2px;top:866.46px;font-size:21.1px;color:#424242;">Medium</div>
<div class="r" style="left:1792px;top:858.0px;width:108px;height:33.5px;background:#d13438;border-radius:4px"></div>
<div class="t" style="left:1798.8px;top:866.84px;font-size:20.9px;color:#ffffff;">2/29/2024</div>
<div class="r" style="left:518px;top:905.0px;width:1452px;height:1px;background:#e6e6e6"></div>
<div class="t" style="left:549.2px;top:928.20px;font-size:18px;color:#424242;transform:translateX(-50%) scaleX(0.87);">7</div>
<svg class="r" style="left:597px;top:925.5px" width="26" height="26" viewBox="0 0 26 26"><circle cx="13" cy="13" r="11.4" fill="none" stroke="#616161" stroke-width="1.4"/></svg>
<div class="t" style="left:664.7px;top:926.82px;font-size:20.8px;color:#424242;">Review global marketing strategy</div>
<svg class="r" style="left:1312px;top:917.0px" width="36" height="36" viewBox="0 0 36 36"><circle cx="18" cy="18" r="18" fill="#0e700e"/><text x="18" y="24" text-anchor="middle" font-family="Liberation Sans" font-weight="700" font-size="16" fill="#fff" textLength="20.5" lengthAdjust="spacingAndGlyphs">AD</text></svg>
<div class="t" style="left:1364.0px;top:926.79px;font-size:20.25px;color:#424242;">Allan Deyoung</div>
<svg class="r" style="left:1587px;top:928.5px" width="10" height="10" viewBox="0 0 10 10"><circle cx="5" cy="5" r="4.5" fill="#237b4b"/></svg>
<div class="t" style="left:1616.2px;top:926.46px;font-size:21.1px;color:#424242;">Medium</div>
<div class="r" style="left:1792px;top:918.0px;width:96px;height:33.5px;background:#d13438;border-radius:4px"></div>
<div class="t" style="left:1798.8px;top:926.84px;font-size:20.9px;color:#ffffff;">3/4/2024</div>
<div class="r" style="left:518px;top:965.0px;width:1452px;height:1px;background:#e6e6e6"></div>
<div class="t" style="left:549.2px;top:988.20px;font-size:18px;color:#424242;transform:translateX(-50%) scaleX(0.87);">9</div>
<svg class="r" style="left:597px;top:985.5px" width="26" height="26" viewBox="0 0 26 26"><circle cx="13" cy="13" r="11.4" fill="none" stroke="#616161" stroke-width="1.4"/></svg>
<div class="t" style="left:664.7px;top:986.82px;font-size:20.8px;color:#424242;">Establish go-to-markets for organization</div>
<svg class="r" style="left:1312px;top:977.0px" width="36" height="36" viewBox="0 0 36 36"><circle cx="18" cy="18" r="18" fill="#0e700e"/><text x="18" y="24" text-anchor="middle" font-family="Liberation Sans" font-weight="700" font-size="16" fill="#fff" textLength="20.5" lengthAdjust="spacingAndGlyphs">AD</text></svg>
<div class="t" style="left:1364.0px;top:986.79px;font-size:20.25px;color:#424242;">Allan Deyoung</div>
<svg class="r" style="left:1587px;top:988.5px" width="10" height="10" viewBox="0 0 10 10"><circle cx="5" cy="5" r="4.5" fill="#237b4b"/></svg>
<div class="t" style="left:1616.2px;top:986.46px;font-size:21.1px;color:#424242;">Medium</div>
<div class="r" style="left:1792px;top:978.0px;width:108px;height:33.5px;background:#d13438;border-radius:4px"></div>
<div class="t" style="left:1798.8px;top:986.84px;font-size:20.9px;color:#ffffff;">3/12/2024</div>
<div class="r" style="left:518px;top:1025.0px;width:1452px;height:1px;background:#e6e6e6"></div>
<div class="t" style="left:549.2px;top:1048.20px;font-size:18px;color:#424242;transform:translateX(-50%) scaleX(0.87);">11</div>
<svg class="r" style="left:597px;top:1045.5px" width="26" height="26" viewBox="0 0 26 26"><circle cx="13" cy="13" r="11.4" fill="none" stroke="#616161" stroke-width="1.4"/></svg>
<div class="t" style="left:664.7px;top:1046.82px;font-size:20.8px;color:#424242;">Evaluate competitive advantages</div>
<svg class="r" style="left:1312px;top:1037.0px" width="36" height="36" viewBox="0 0 36 36"><circle cx="18" cy="18" r="18" fill="#986f0b"/><text x="18" y="24" text-anchor="middle" font-family="Liberation Sans" font-weight="700" font-size="16" fill="#fff" textLength="17.6" lengthAdjust="spacingAndGlyphs">CC</text></svg>
<div class="t" style="left:1364.0px;top:1046.79px;font-size:20.25px;color:#424242;">Christie Cline</div>
<svg class="r" style="left:1587px;top:1048.5px" width="10" height="10" viewBox="0 0 10 10"><circle cx="5" cy="5" r="4.5" fill="#237b4b"/></svg>
<div class="t" style="left:1616.2px;top:1046.47px;font-size:21.1px;color:#424242;">Medium</div>
<div class="r" style="left:1792px;top:1038.0px;width:108px;height:33.5px;background:#d13438;border-radius:4px"></div>
<div class="t" style="left:1798.8px;top:1046.83px;font-size:20.9px;color:#ffffff;">2/21/2024</div>
<div class="r" style="left:518px;top:1085.0px;width:1452px;height:1px;background:#e6e6e6"></div>
<div class="r" style="left:518px;top:1085.0px;width:1452px;height:2px;background:#e6e6e6"></div>
<svg class="r" style="left:621px;top:1105.5px" width="24" height="24" viewBox="0 0 24 24"><path d="M12 1.5V22.5M1.5 12H22.5" stroke="#6264a7" stroke-width="1.3"/></svg>
<div class="t" style="left:686.5px;top:1107.46px;font-size:20.63px;color:#6264a7;">Add new task</div>
<div class="r" style="left:518px;top:1145.0px;width:1452px;height:1px;background:#ececec"></div>
<div class="r" style="left:518px;top:1146.0px;width:1432px;height:10px;background:#c4c4c4;border-radius:5px"></div>
<div class="r" style="left:481px;top:1163.5px;width:1524px;height:92.5px;border:1px solid #e0e0e0;border-radius:8px;background:#fff;box-sizing:border-box;width:1526px"></div>
<div class="r" style="left:482px;top:1164.5px;width:1524px;height:68.5px;background:#faf9f8;border-radius:7px 7px 8px 8px"></div>
<svg class="r" style="left:496px;top:1192.5px" width="18" height="12" viewBox="0 0 18 12"><path d="M3.3 3.7L9.4 9.9L15.5 3.7" fill="none" stroke="#242424" stroke-width="1.3" stroke-linecap="round" stroke-linejoin="round"/></svg>
<svg class="r" style="left:526px;top:1181.0px" width="36" height="36" viewBox="0 0 36 36"><circle cx="18" cy="18" r="18" fill="#e8bba5"/><g fill="none" stroke="#b9501c" stroke-width="1.35" stroke-linejoin="round"><path d="M12.2 7.3 Q12.2 6.3 13.2 6.3 H22.2 Q23.2 6.3 23.2 7.3 V15.5 Q23.2 20.8 17.7 20.8 Q12.2 20.8 12.2 15.5 Z"/><path d="M12.2 9.5 H10 Q8.8 9.5 8.8 10.7 V12.7 Q8.8 15.4 12.4 15.8"/><path d="M23.2 9.5 H25.4 Q26.6 9.5 26.6 10.7 V12.7 Q26.6 15.4 23 15.8"/><path d="M17.7 20.8 V24"/><path d="M13.8 23.8 H21.6 Q23.4 23.8 23.4 25.6 V26.5 H12 V25.6 Q12 23.8 13.8 23.8Z"/></g></svg>
<div class="t" style="left:591.4px;top:1192.71px;font-size:21.4px;color:#242424;-webkit-text-stroke:0.22px #242424;">Stay within $10000 budget for Fall marketing campaign</div>
<svg class="r" style="left:1476px;top:1185.5px" width="26" height="26" viewBox="0 0 26 26"><rect x="2.5" y="2.5" width="20" height="20" rx="3" fill="none" stroke="#616161" stroke-width="1.5"/><path d="M2.5 7.5H22.5" stroke="#616161" stroke-width="1.5"/><circle cx="8.0" cy="12.0" r="1.2" fill="#616161"/><circle cx="12.5" cy="12.0" r="1.2" fill="#616161"/><circle cx="17.0" cy="12.0" r="1.2" fill="#616161"/><circle cx="8.0" cy="16.5" r="1.2" fill="#616161"/><circle cx="12.5" cy="16.5" r="1.2" fill="#616161"/></svg>
<div class="t" style="left:1512.5px;top:1189.63px;font-size:19.85px;color:#616161;">End date</div>
<div class="r" style="left:1657px;top:1185.0px;width:114px;height:29px;background:#ebebeb;border-radius:6px"></div>
<div class="t" style="left:1669.6px;top:1191.56px;font-size:18.16px;color:#616161;">Not started</div>
<svg class="r" style="left:1840px;top:1185.5px" width="26" height="26" viewBox="0 0 26 26"><g transform="translate(13.65 12.75) rotate(-45)" fill="none" stroke="#242424" stroke-width="1.3" stroke-linejoin="round" stroke-linecap="round"><path d="M-2.55 -4.3H-4.3A3.9 4.3 0 0 0 -4.3 4.3H-2.55Z"/><path d="M2.55 -4.3H4.3A3.9 4.3 0 0 1 4.3 4.3H2.55Z"/><path d="M-8 0H-13.5M8 0H13.5"/></g></svg>
<div class="t" style="left:1876.4px;top:1190.39px;font-size:17.3px;color:#4f52b2;">4 tasks</div>
<div class="t" style="left:664.6px;top:1255.12px;font-size:17.5px;color:#242424;">Name</div>
<div class="t" style="left:1312.3px;top:1255.12px;font-size:17.5px;color:#242424;">Assigned to</div>
<div class="t" style="left:1582.2px;top:1255.12px;font-size:17.5px;color:#242424;">Priority</div>
<div class="t" style="left:1798.3px;top:1255.12px;font-size:17.5px;color:#242424;">Finish</div>
<div class="r" style="left:518px;top:1292.0px;width:1452px;height:1px;background:#e6e6e6"></div>
<div class="r" style="left:518px;top:1292.0px;width:1452px;height:2px;background:#e6e6e6"></div>
<svg class="r" style="left:621px;top:1312.5px" width="24" height="24" viewBox="0 0 24 24"><path d="M12 1.5V22.5M1.5 12H22.5" stroke="#6264a7" stroke-width="1.3"/></svg>
<div class="t" style="left:686.5px;top:1314.46px;font-size:20.63px;color:#6264a7;">Add new task</div>
<div class="r" style="left:518px;top:1352.0px;width:1452px;height:1px;background:#ececec"></div>
<div class="r" style="left:518px;top:1353.0px;width:1432px;height:10px;background:#c4c4c4;border-radius:5px"></div>
</body></html>
